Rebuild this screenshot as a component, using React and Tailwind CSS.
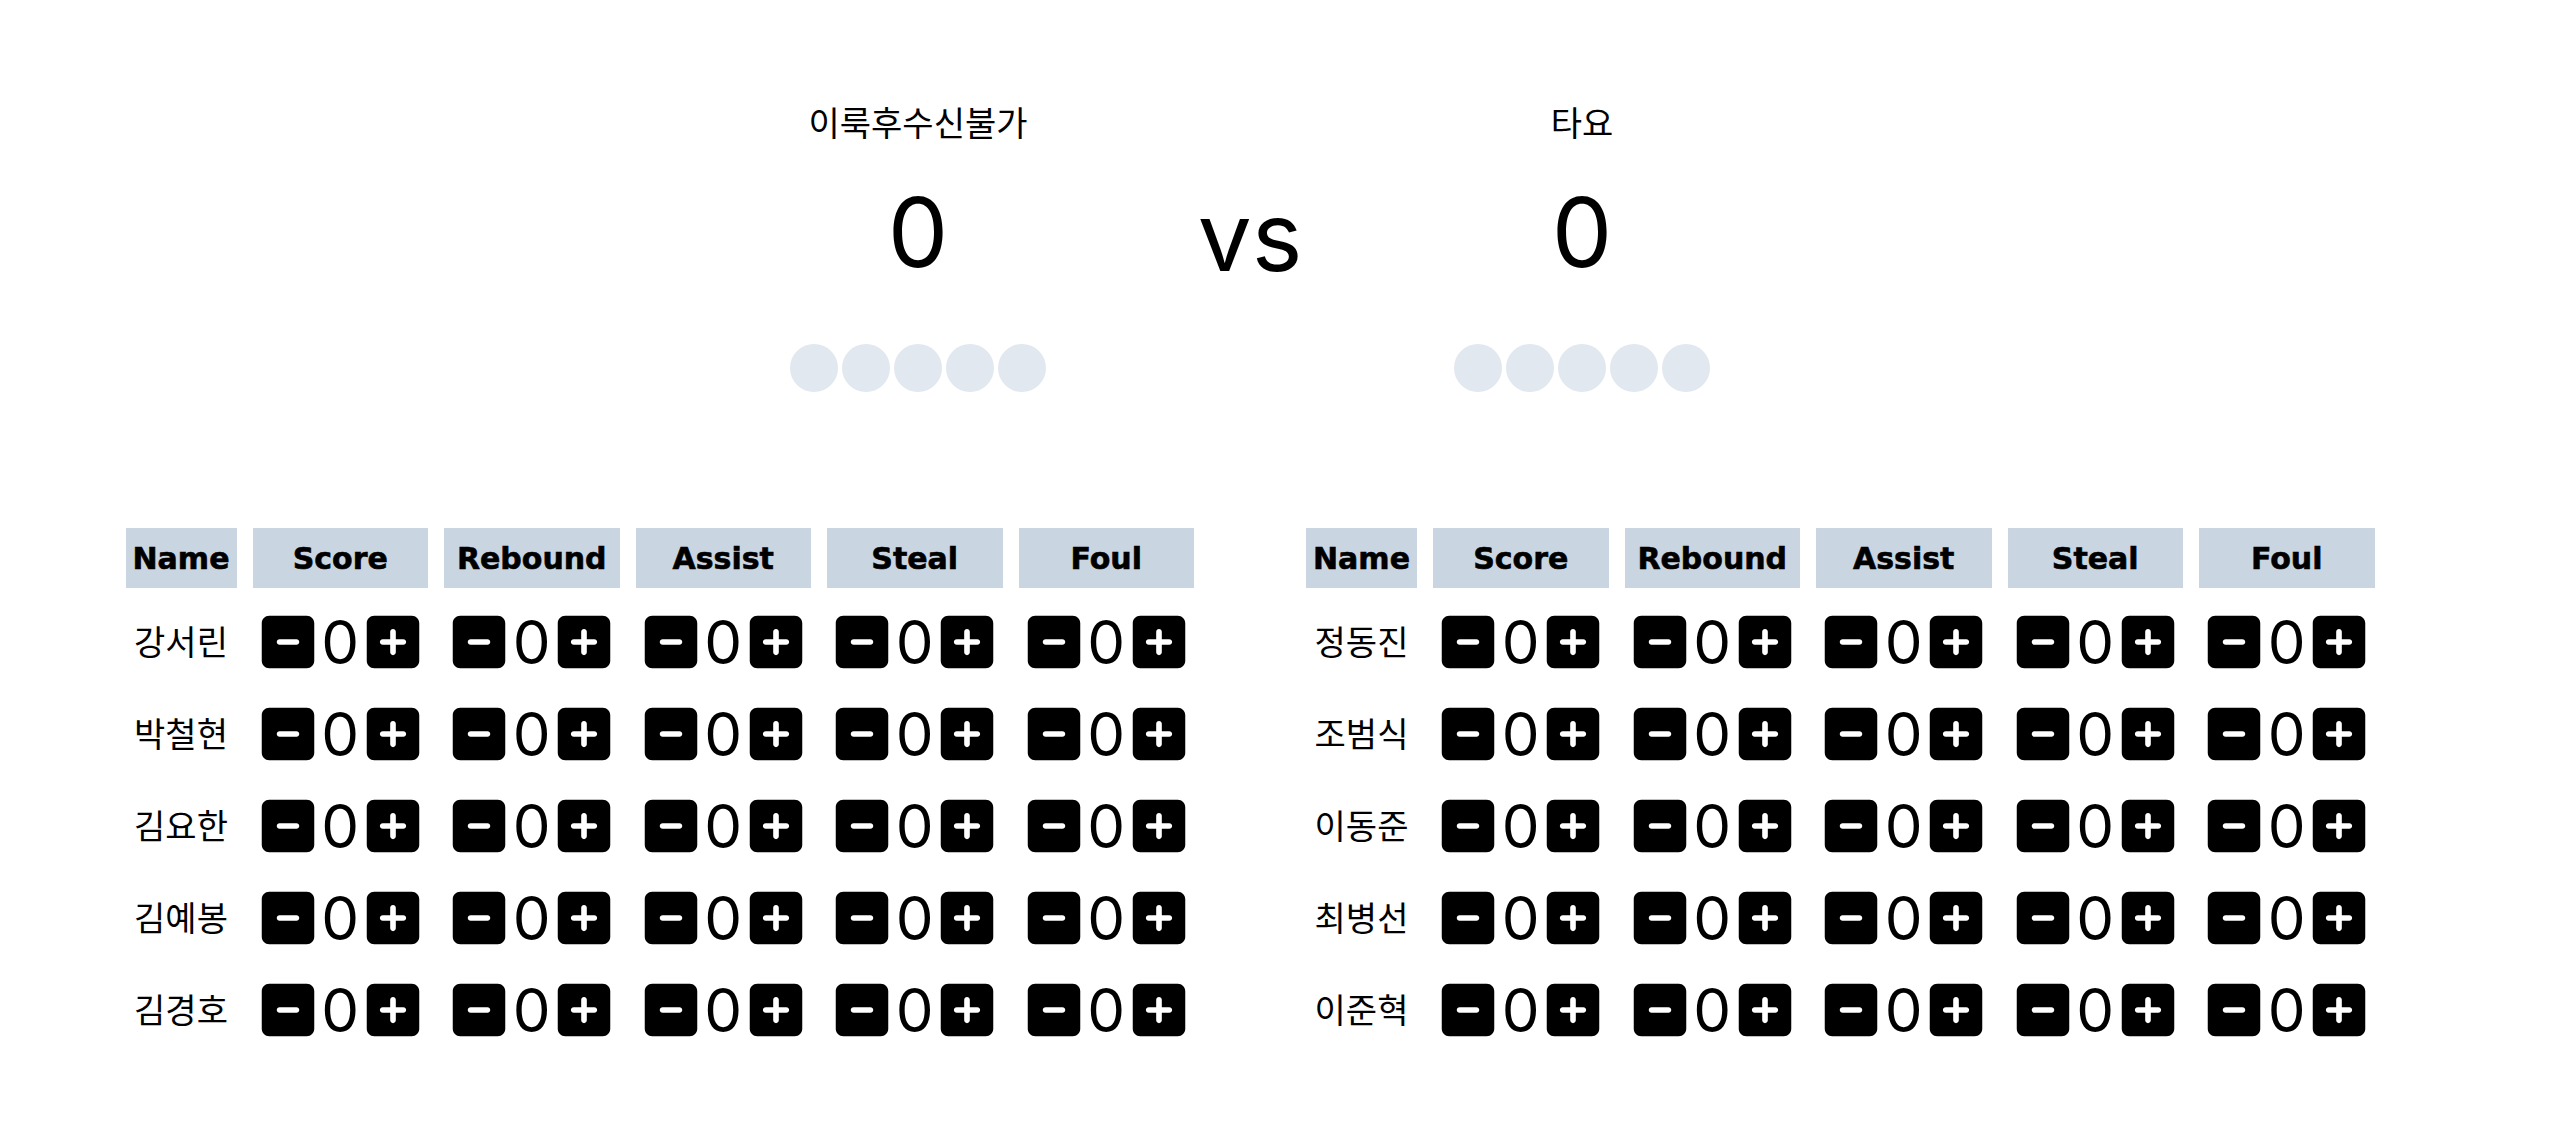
import { FaSquareMinus, FaSquarePlus } from "react-icons/fa6";

const teams = [
    {
        name: "이룩후수신불가",
        players: ["강서린", "박철현", "김요한", "김예봉", "김경호"],
    },
    {
        name: "타요",
        players: ["정동진", "조범식", "이동준", "최병선", "이준혁"],
    },
];

const stats = ["Score", "Rebound", "Assist", "Steal", "Foul"];

function TeamHeader({ team }) {
    return (
        <div className="flex w-[256px] flex-col items-center">
            <div className="whitespace-nowrap text-[34px] leading-[32px]">{team.name}</div>
            <div className="mt-[44px] text-[96px] leading-none">0</div>
            {/* timeout dots */}
            <div className="mt-[64px] flex gap-1">
                {[0, 1, 2, 3, 4].map((i) => (
                    <div key={i} className="size-12 rounded-full bg-slate-200" />
                ))}
            </div>
        </div>
    );
}

function Counter() {
    return (
        <div className="flex items-center justify-center">
            <button className="flex">
                <FaSquareMinus size={60} />
            </button>
            <span className="w-[45px] text-center text-[60px] leading-none">0</span>
            <button className="flex">
                <FaSquarePlus size={60} />
            </button>
        </div>
    );
}

const th =
    "flex h-[60px] items-center justify-center bg-slate-300 font-['DejaVu_Sans',sans-serif] text-[30px] font-bold [-webkit-text-stroke:0.6px_black]";

function StatTable({ team }) {
    return (
        <div className="grid grid-cols-[111px_repeat(5,175.5px)] gap-4 p-4">
            <div className={th}>Name</div>
            {stats.map((s) => (
                <div key={s} className={th}>
                    {s}
                </div>
            ))}
            {team.players.map((p) => (
                <div key={p} className="contents">
                    <div className="flex h-[76px] items-center justify-center text-[34px]">{p}</div>
                    {stats.map((s) => (
                        <div key={s} className="flex h-[76px] items-center justify-center">
                            <Counter />
                        </div>
                    ))}
                </div>
            ))}
        </div>
    );
}

export default function App() {
    return (
        <div className="min-h-screen bg-white font-['Inter','Noto_Sans_CJK_KR',sans-serif] text-black">
            <div className="flex justify-center pr-[52px] pt-[108px]">
                <TeamHeader team={teams[0]} />
                <div className="mx-[144px] mt-[80px] w-[120px] text-center text-[96px] leading-none">vs</div>
                <TeamHeader team={teams[1]} />
            </div>

            <div className="mt-[120px] flex justify-center gap-[80px] pr-[52px]">
                <StatTable team={teams[0]} />
                <StatTable team={teams[1]} />
            </div>
        </div>
    );
}
